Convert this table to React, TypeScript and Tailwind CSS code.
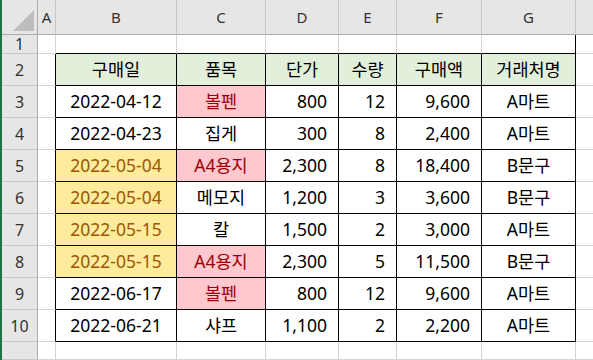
import React from "react";

type Cell = { t: string; align?: "c" | "r"; tone?: "pink" | "yellow" };

const header = ["구매일", "품목", "단가", "수량", "구매액", "거래처명"];

const data: Cell[][] = [
  [{ t: "2022-04-12" }, { t: "볼펜", tone: "pink" }, { t: "800", align: "r" }, { t: "12", align: "r" }, { t: "9,600", align: "r" }, { t: "A마트" }],
  [{ t: "2022-04-23" }, { t: "집게" }, { t: "300", align: "r" }, { t: "8", align: "r" }, { t: "2,400", align: "r" }, { t: "A마트" }],
  [{ t: "2022-05-04", tone: "yellow" }, { t: "A4용지", tone: "pink" }, { t: "2,300", align: "r" }, { t: "8", align: "r" }, { t: "18,400", align: "r" }, { t: "B문구" }],
  [{ t: "2022-05-04", tone: "yellow" }, { t: "메모지" }, { t: "1,200", align: "r" }, { t: "3", align: "r" }, { t: "3,600", align: "r" }, { t: "B문구" }],
  [{ t: "2022-05-15", tone: "yellow" }, { t: "칼" }, { t: "1,500", align: "r" }, { t: "2", align: "r" }, { t: "3,000", align: "r" }, { t: "A마트" }],
  [{ t: "2022-05-15", tone: "yellow" }, { t: "A4용지", tone: "pink" }, { t: "2,300", align: "r" }, { t: "5", align: "r" }, { t: "11,500", align: "r" }, { t: "B문구" }],
  [{ t: "2022-06-17" }, { t: "볼펜", tone: "pink" }, { t: "800", align: "r" }, { t: "12", align: "r" }, { t: "9,600", align: "r" }, { t: "A마트" }],
  [{ t: "2022-06-21" }, { t: "샤프" }, { t: "1,100", align: "r" }, { t: "2", align: "r" }, { t: "2,200", align: "r" }, { t: "A마트" }],
];

const cols = ["A", "B", "C", "D", "E", "F", "G", ""];

export default function App() {
  const cells: React.ReactNode[] = [];

  cells.push(
    <div key="corner" className="relative bg-[#e6e6e6] border-r border-b border-r-[#ababab] border-b-[#ababab]">
      <div
        className="absolute left-[11px] top-[10px] w-[21px] h-[21px] bg-[#bdbdbd]"
        style={{ clipPath: "polygon(100% 0, 100% 100%, 0 100%)" }}
      />
    </div>
  );
  cols.forEach((c, i) => {
    cells.push(
      <div
        key={"ch" + i}
        className={`flex items-center justify-center bg-[#e6e6e6] border-b border-b-[#ababab] text-[15px] text-[#333] ${i < 7 ? "border-r border-r-[#c8c8c8]" : ""}`}
      >
        {c}
      </div>
    );
  });

  const rowHead = (n: number | null, key: string) => (
    <div
      key={key}
      className="flex items-center justify-center bg-[#e6e6e6] border-r border-b border-r-[#ababab] border-b-[#c8c8c8] text-[16px] text-[#333]"
    >
      {n}
    </div>
  );

  const blank = (key: string, rightBlack: boolean, bottomBlack: boolean, noRight = false) => (
    <div
      key={key}
      className={`bg-white border-b ${noRight ? "" : "border-r"} ${rightBlack ? "border-r-black" : "border-r-[#d4d4d4]"} ${bottomBlack ? "border-b-black" : "border-b-[#d4d4d4]"}`}
    />
  );

  cells.push(rowHead(1, "rh1"));
  cells.push(blank("r1a", false, false));
  for (let i = 0; i < 6; i++) cells.push(blank("r1" + i, i === 5, true));
  cells.push(blank("r1h", false, false, true));

  cells.push(rowHead(2, "rh2"));
  cells.push(blank("r2a", true, false));
  header.forEach((h, i) => {
    cells.push(
      <div key={"h" + i} className="flex items-center justify-center bg-[#e2efda] border-r border-b border-black text-black">
        {h}
      </div>
    );
  });
  cells.push(blank("r2h", false, false, true));

  data.forEach((row, ri) => {
    const n = ri + 3;
    cells.push(rowHead(n, "rh" + n));
    cells.push(blank("ra" + n, true, false));
    row.forEach((c, ci) => {
      const tone =
        c.tone === "pink"
          ? "bg-[#ffc7ce] text-[#9c0006]"
          : c.tone === "yellow"
          ? "bg-[#ffeb9c] text-[#9c5700]"
          : "bg-white text-black";
      const al = c.align === "r" ? "justify-end pr-[11px]" : "justify-center";
      cells.push(
        <div key={"c" + n + "-" + ci} className={`flex items-center ${al} ${tone} border-r border-b border-black`}>
          {c.t}
        </div>
      );
    });
    cells.push(blank("rh" + n + "x", false, false, true));
  });

  cells.push(rowHead(null, "rh11"));
  cells.push(blank("r11a", false, false));
  for (let i = 0; i < 6; i++) cells.push(blank("r11" + i, false, false));
  cells.push(blank("r11h", false, false, true));

  return (
    <div
      className="w-[593px] h-[360px] overflow-hidden bg-white border-l-2 border-l-[#217346]"
      style={{ fontFamily: '"Noto Sans", "Noto Sans CJK KR", sans-serif' }}
    >
      <div className="grid grid-cols-[36px_18px_121px_89px_73px_58px_85px_94px_1fr] grid-rows-[35px_19px_repeat(9,32px)_18px_1fr] h-[360px] text-[17.5px] leading-none">
        {cells}
      </div>
    </div>
  );
}
